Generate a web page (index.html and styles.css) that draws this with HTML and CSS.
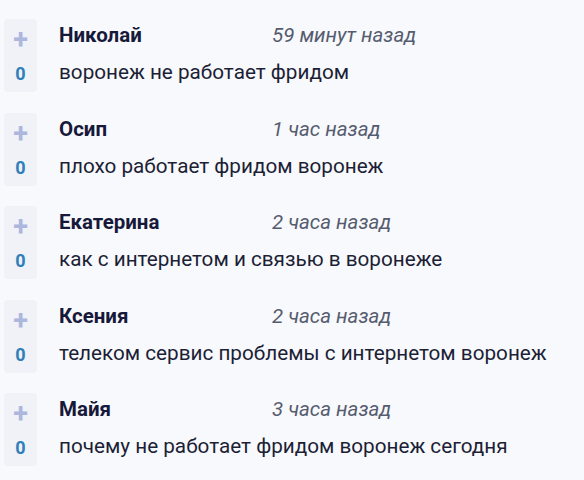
FILE: index.html
```html
<!DOCTYPE html>
<html lang="ru">
<head>
<meta charset="utf-8">
<link rel="stylesheet" href="styles.css">
</head>
<body>
<div class="list">
  <div class="item">
    <div class="vote"><span class="plus">+</span><span class="count">0</span></div>
    <div class="body">
      <div class="head"><span class="name">Николай</span><span class="time">59 минут назад</span></div>
      <div class="text">воронеж не работает фридом</div>
    </div>
  </div>
  <div class="item">
    <div class="vote"><span class="plus">+</span><span class="count">0</span></div>
    <div class="body">
      <div class="head"><span class="name">Осип</span><span class="time">1 час назад</span></div>
      <div class="text">плохо работает фридом воронеж</div>
    </div>
  </div>
  <div class="item">
    <div class="vote"><span class="plus">+</span><span class="count">0</span></div>
    <div class="body">
      <div class="head"><span class="name">Екатерина</span><span class="time">2 часа назад</span></div>
      <div class="text">как с интернетом и связью в воронеже</div>
    </div>
  </div>
  <div class="item">
    <div class="vote"><span class="plus">+</span><span class="count">0</span></div>
    <div class="body">
      <div class="head"><span class="name">Ксения</span><span class="time">2 часа назад</span></div>
      <div class="text">телеком сервис проблемы с интернетом воронеж</div>
    </div>
  </div>
  <div class="item">
    <div class="vote"><span class="plus">+</span><span class="count">0</span></div>
    <div class="body">
      <div class="head"><span class="name">Майя</span><span class="time">3 часа назад</span></div>
      <div class="text">почему не работает фридом воронеж сегодня</div>
    </div>
  </div>
</div>
</body>
</html>
```
FILE: styles.css
```css
html, body {
  margin: 0;
  padding: 0;
  background: #f8f9fc;
}
body {
  font-family: Roboto, "Liberation Sans", sans-serif;
  color: #1c1f36;
}
.list {
  display: flex;
  flex-direction: column;
  gap: 20.5px;
  padding: 19px 0 0 4px;
}
.item {
  display: flex;
  gap: 22px;
}
.vote {
  width: 33px;
  height: 73px;
  background: #f0f2f8;
  border-radius: 4px;
  display: flex;
  flex-direction: column;
  align-items: center;
}
.plus {
  margin-top: 8px;
  font-size: 27px;
  font-weight: 700;
  line-height: 26px;
  color: #adb7dd;
}
.count {
  margin-top: 11px;
  font-size: 18px;
  font-weight: 700;
  line-height: 20px;
  color: #2f7fb8;
}
.body {
  display: flex;
  flex-direction: column;
}
.head {
  display: flex;
  margin-top: 4px;
  line-height: 24px;
}
.name {
  width: 213px;
  font-size: 20.5px;
  font-weight: 700;
  color: #17193a;
}
.time {
  font-size: 20.5px;
  font-style: italic;
  color: #565c6f;
}
.text {
  margin-top: 13px;
  font-size: 20.7px;
  line-height: 24px;
  color: #1c1f36;
}
```
